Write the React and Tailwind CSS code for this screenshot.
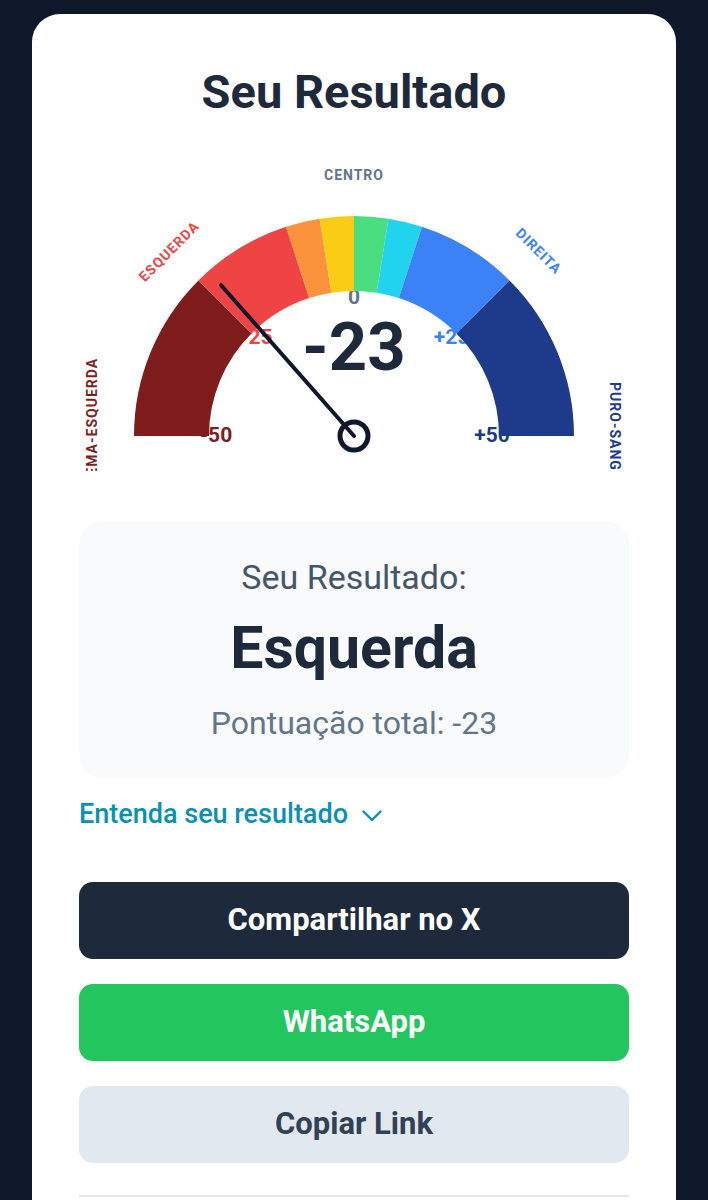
const CX = 275;
const CY = 285;
const R_OUT = 220;
const R_IN = 145;

const segments = [
  { from: -50, to: -25, color: "#7f1d1d" },
  { from: -25, to: -10, color: "#ef4444" },
  { from: -10, to: -5, color: "#fb923c" },
  { from: -5, to: 0, color: "#facc15" },
  { from: 0, to: 5, color: "#4ade80" },
  { from: 5, to: 10, color: "#22d3ee" },
  { from: 10, to: 25, color: "#3b82f6" },
  { from: 25, to: 50, color: "#1e3a8a" },
];

const ticks = [
  { v: -50, label: "-50", color: "#7f1d1d" },
  { v: -25, label: "-25", color: "#ef4444" },
  { v: 0, label: "0", color: "#64748b" },
  { v: 25, label: "+25", color: "#3b82f6" },
  { v: 50, label: "+50", color: "#1e3a8a" },
];

const angleOf = (v) => Math.PI * (1 - (v + 50) / 100);
const point = (v, r) => {
  const a = angleOf(v);
  return [CX + r * Math.cos(a), CY - r * Math.sin(a)];
};

const arcPath = (from, to) => {
  const [x1, y1] = point(from, R_OUT);
  const [x2, y2] = point(to, R_OUT);
  const [x3, y3] = point(to, R_IN);
  const [x4, y4] = point(from, R_IN);
  return `M ${x1} ${y1} A ${R_OUT} ${R_OUT} 0 0 1 ${x2} ${y2} L ${x3} ${y3} A ${R_IN} ${R_IN} 0 0 0 ${x4} ${y4} Z`;
};

const Gauge = ({ score }) => {
  const [nx, ny] = point(score, 201);
  const labelStyle = { fontSize: 14, fontWeight: 700, letterSpacing: 1 };

  return (
    <svg width="550" height="320" viewBox="0 0 550 320" className="block mx-auto mt-8">
      {/* zone names */}
      <text x={CX} y={25} textAnchor="middle" dominantBaseline="middle" fill="#64748b" style={labelStyle}>
        CENTRO
      </text>
      <text x={91} y={101} textAnchor="middle" dominantBaseline="middle" fill="#ef4444" style={labelStyle} transform="rotate(-45 91 101)">
        ESQUERDA
      </text>
      <text x={459} y={101} textAnchor="middle" dominantBaseline="middle" fill="#3b82f6" style={labelStyle} transform="rotate(45 459 101)">
        DIREITA
      </text>
      <text x={14} y={CY} textAnchor="middle" dominantBaseline="middle" fill="#7f1d1d" style={labelStyle} transform={`rotate(-90 14 ${CY})`}>
        EXTREMA-ESQUERDA
      </text>
      <text x={535} y={CY} textAnchor="middle" dominantBaseline="middle" fill="#1e3a8a" style={labelStyle} transform={`rotate(90 535 ${CY})`}>
        PURO-SANGUE
      </text>

      {/* tick values, arcs sit on top of them */}
      {ticks.map((t) => {
        const [x, y] = point(t.v, 138);
        return (
          <text key={t.label} x={x} y={y} textAnchor="middle" dominantBaseline="middle" fill={t.color} style={{ fontSize: 21, fontWeight: 700 }}>
            {t.label}
          </text>
        );
      })}

      {segments.map((s) => (
        <path key={s.from} d={arcPath(s.from, s.to)} fill={s.color} />
      ))}

      <text x={CX} y={201} textAnchor="middle" dominantBaseline="middle" fill="#1e293b" style={{ fontSize: 67, fontWeight: 700 }}>
        {score}
      </text>

      <line x1={CX} y1={CY} x2={nx} y2={ny} stroke="#0f172a" strokeWidth="4" strokeLinecap="round" />
      <circle cx={CX} cy={CY} r="14" fill="none" stroke="#0f172a" strokeWidth="5" />
    </svg>
  );
};

export default function App() {
  const score = -23;

  return (
    <div className="min-h-screen bg-[#0f172a] px-8 pt-[14px] font-['Roboto',sans-serif]">
      <div className="bg-white rounded-t-[28px] px-[47px] pt-[51px] pb-10">
        <h1 className="text-center text-[47px] leading-[54px] font-bold text-[#1e293b]">
          Seu Resultado
        </h1>

        <Gauge score={score} />

        {/* Result summary */}
        <div className="mt-[50px] bg-[#f8fafc] rounded-3xl pt-[37px] pb-[36px] text-center">
          <p className="text-[34px] leading-[38px] text-[#475569]">Seu Resultado:</p>
          <p className="mt-[16px] text-[59px] leading-[72px] font-bold text-[#1e293b]">Esquerda</p>
          <p className="mt-[20px] text-[32px] leading-[38px] text-[#64748b]">
            Pontuação total: {score}
          </p>
        </div>

        <button className="mt-5 flex items-center gap-[14px] text-[27px] leading-[32px] font-medium text-[#0891b2]">
          Entenda seu resultado
          <svg width="20" height="12" viewBox="0 0 20 12" fill="none" className="mt-1">
            <polyline points="1.5,1.5 10,10 18.5,1.5" stroke="currentColor" strokeWidth="2.4" strokeLinecap="round" strokeLinejoin="round" />
          </svg>
        </button>

        <div className="mt-[52px] flex flex-col gap-[25px]">
          <button className="h-[77px] rounded-[14px] bg-[#1e293b] text-white text-[31px] font-bold">
            Compartilhar no X
          </button>
          <button className="h-[77px] rounded-[14px] bg-[#22c55e] text-white text-[31px] font-bold">
            WhatsApp
          </button>
          <button className="h-[77px] rounded-[14px] bg-[#e2e8f0] text-[#334155] text-[31px] font-bold">
            Copiar Link
          </button>
        </div>

        <div className="mt-8 border-t-2 border-[#e2e8f0] h-20" />
      </div>
    </div>
  );
}
